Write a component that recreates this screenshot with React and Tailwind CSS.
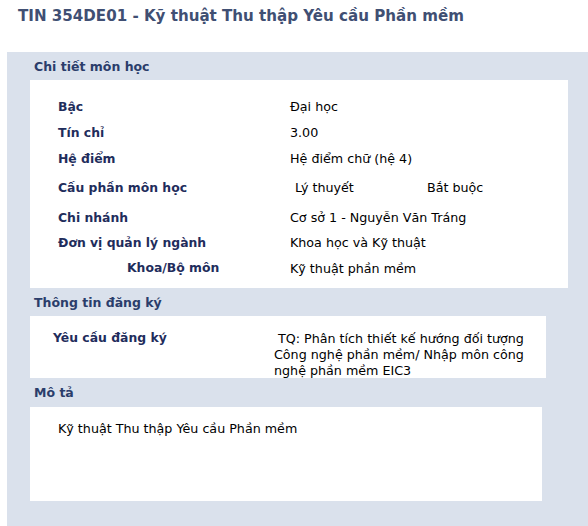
export default function App() {
  const font = { fontFamily: '"DejaVu Sans", Verdana, sans-serif' };
  const rows = [
    { label: 'Bậc', value: 'Đại học', h: 'h-[26px]' },
    { label: 'Tín chỉ', value: '3.00', h: 'h-[26px]' },
    { label: 'Hệ điểm', value: 'Hệ điểm chữ (hệ 4)', h: 'h-[26px]' },
  ];
  return (
    <div className="w-[588px] h-[526px] bg-white overflow-hidden" style={font}>
      <div className="h-[52px] pl-[18px] pt-[6px]">
        <h1 className="text-[15.1px] font-bold text-[#404f73] leading-[20px]">
          TIN 354DE01 - Kỹ thuật Thu thập Yêu cầu Phần mềm
        </h1>
      </div>
      <div className="ml-[7px] h-[474px] bg-[#dae1ec] flex flex-col">
        {/* Chi tiết môn học */}
        <div className="h-[28px] flex items-center pl-[27px] pt-[2px] text-[12.5px] font-bold text-[#2b3d6b]">
          Chi tiết môn học
        </div>
        <div className="ml-[23px] w-[538px] h-[208px] bg-white pt-[14px] text-[12.7px]">
          {rows.map((r) => (
            <div key={r.label} className={`${r.h} flex items-center`}>
              <div className="w-[260px] pl-[28px] text-[12.4px] font-bold text-[#1f2d5c]">{r.label}</div>
              <div className="text-black">{r.value}</div>
            </div>
          ))}
          <div className="h-[32px] flex items-center">
            <div className="w-[260px] pl-[28px] text-[12.4px] font-bold text-[#1f2d5c]">Cấu phần môn học</div>
            <div className="w-[137px] pl-[5px] text-black">Lý thuyết</div>
            <div className="text-black">Bắt buộc</div>
          </div>
          <div className="h-[28px] flex items-center">
            <div className="w-[260px] pl-[28px] text-[12.4px] font-bold text-[#1f2d5c]">Chi nhánh</div>
            <div className="text-black">Cơ sở 1 - Nguyễn Văn Tráng</div>
          </div>
          <div className="h-[22px] flex items-center">
            <div className="w-[260px] pl-[28px] text-[12.4px] font-bold text-[#1f2d5c]">Đơn vị quản lý ngành</div>
            <div className="text-black">Khoa học và Kỹ thuật</div>
          </div>
          <div className="h-[29px] flex items-center">
            <div className="w-[260px] pl-[97px] text-[12.4px] font-bold text-[#1f2d5c]">Khoa/Bộ môn</div>
            <div className="text-black">Kỹ thuật phần mềm</div>
          </div>
        </div>

        {/* Thông tin đăng ký */}
        <div className="h-[28px] flex items-center pl-[27px] pt-[2px] text-[12.5px] font-bold text-[#2b3d6b]">
          Thông tin đăng ký
        </div>
        <div className="ml-[23px] w-[516px] h-[62px] bg-white flex text-[12.7px]">
          <div className="w-[244px] pl-[23px] pt-[14px] text-[12.4px] font-bold text-[#1f2d5c] leading-[16px]">
            Yêu cầu đăng ký
          </div>
          <div className="pt-[15px] text-black leading-[16px] whitespace-nowrap">
            <div className="pl-[4px]">TQ: Phân tích thiết kế hướng đối tượng</div>
            <div>Công nghệ phần mềm/ Nhập môn công</div>
            <div>nghệ phần mềm EIC3</div>
          </div>
        </div>

        {/* Mô tả */}
        <div className="h-[29px] flex items-center pl-[27px] pt-[1px] text-[12.5px] font-bold text-[#2b3d6b]">
          Mô tả
        </div>
        <div className="ml-[23px] w-[512px] h-[94px] bg-white pl-[28px] pt-[14px] text-[12.7px] text-black leading-[16px]">
          Kỹ thuật Thu thập Yêu cầu Phần mềm
        </div>
      </div>
    </div>
  );
}
